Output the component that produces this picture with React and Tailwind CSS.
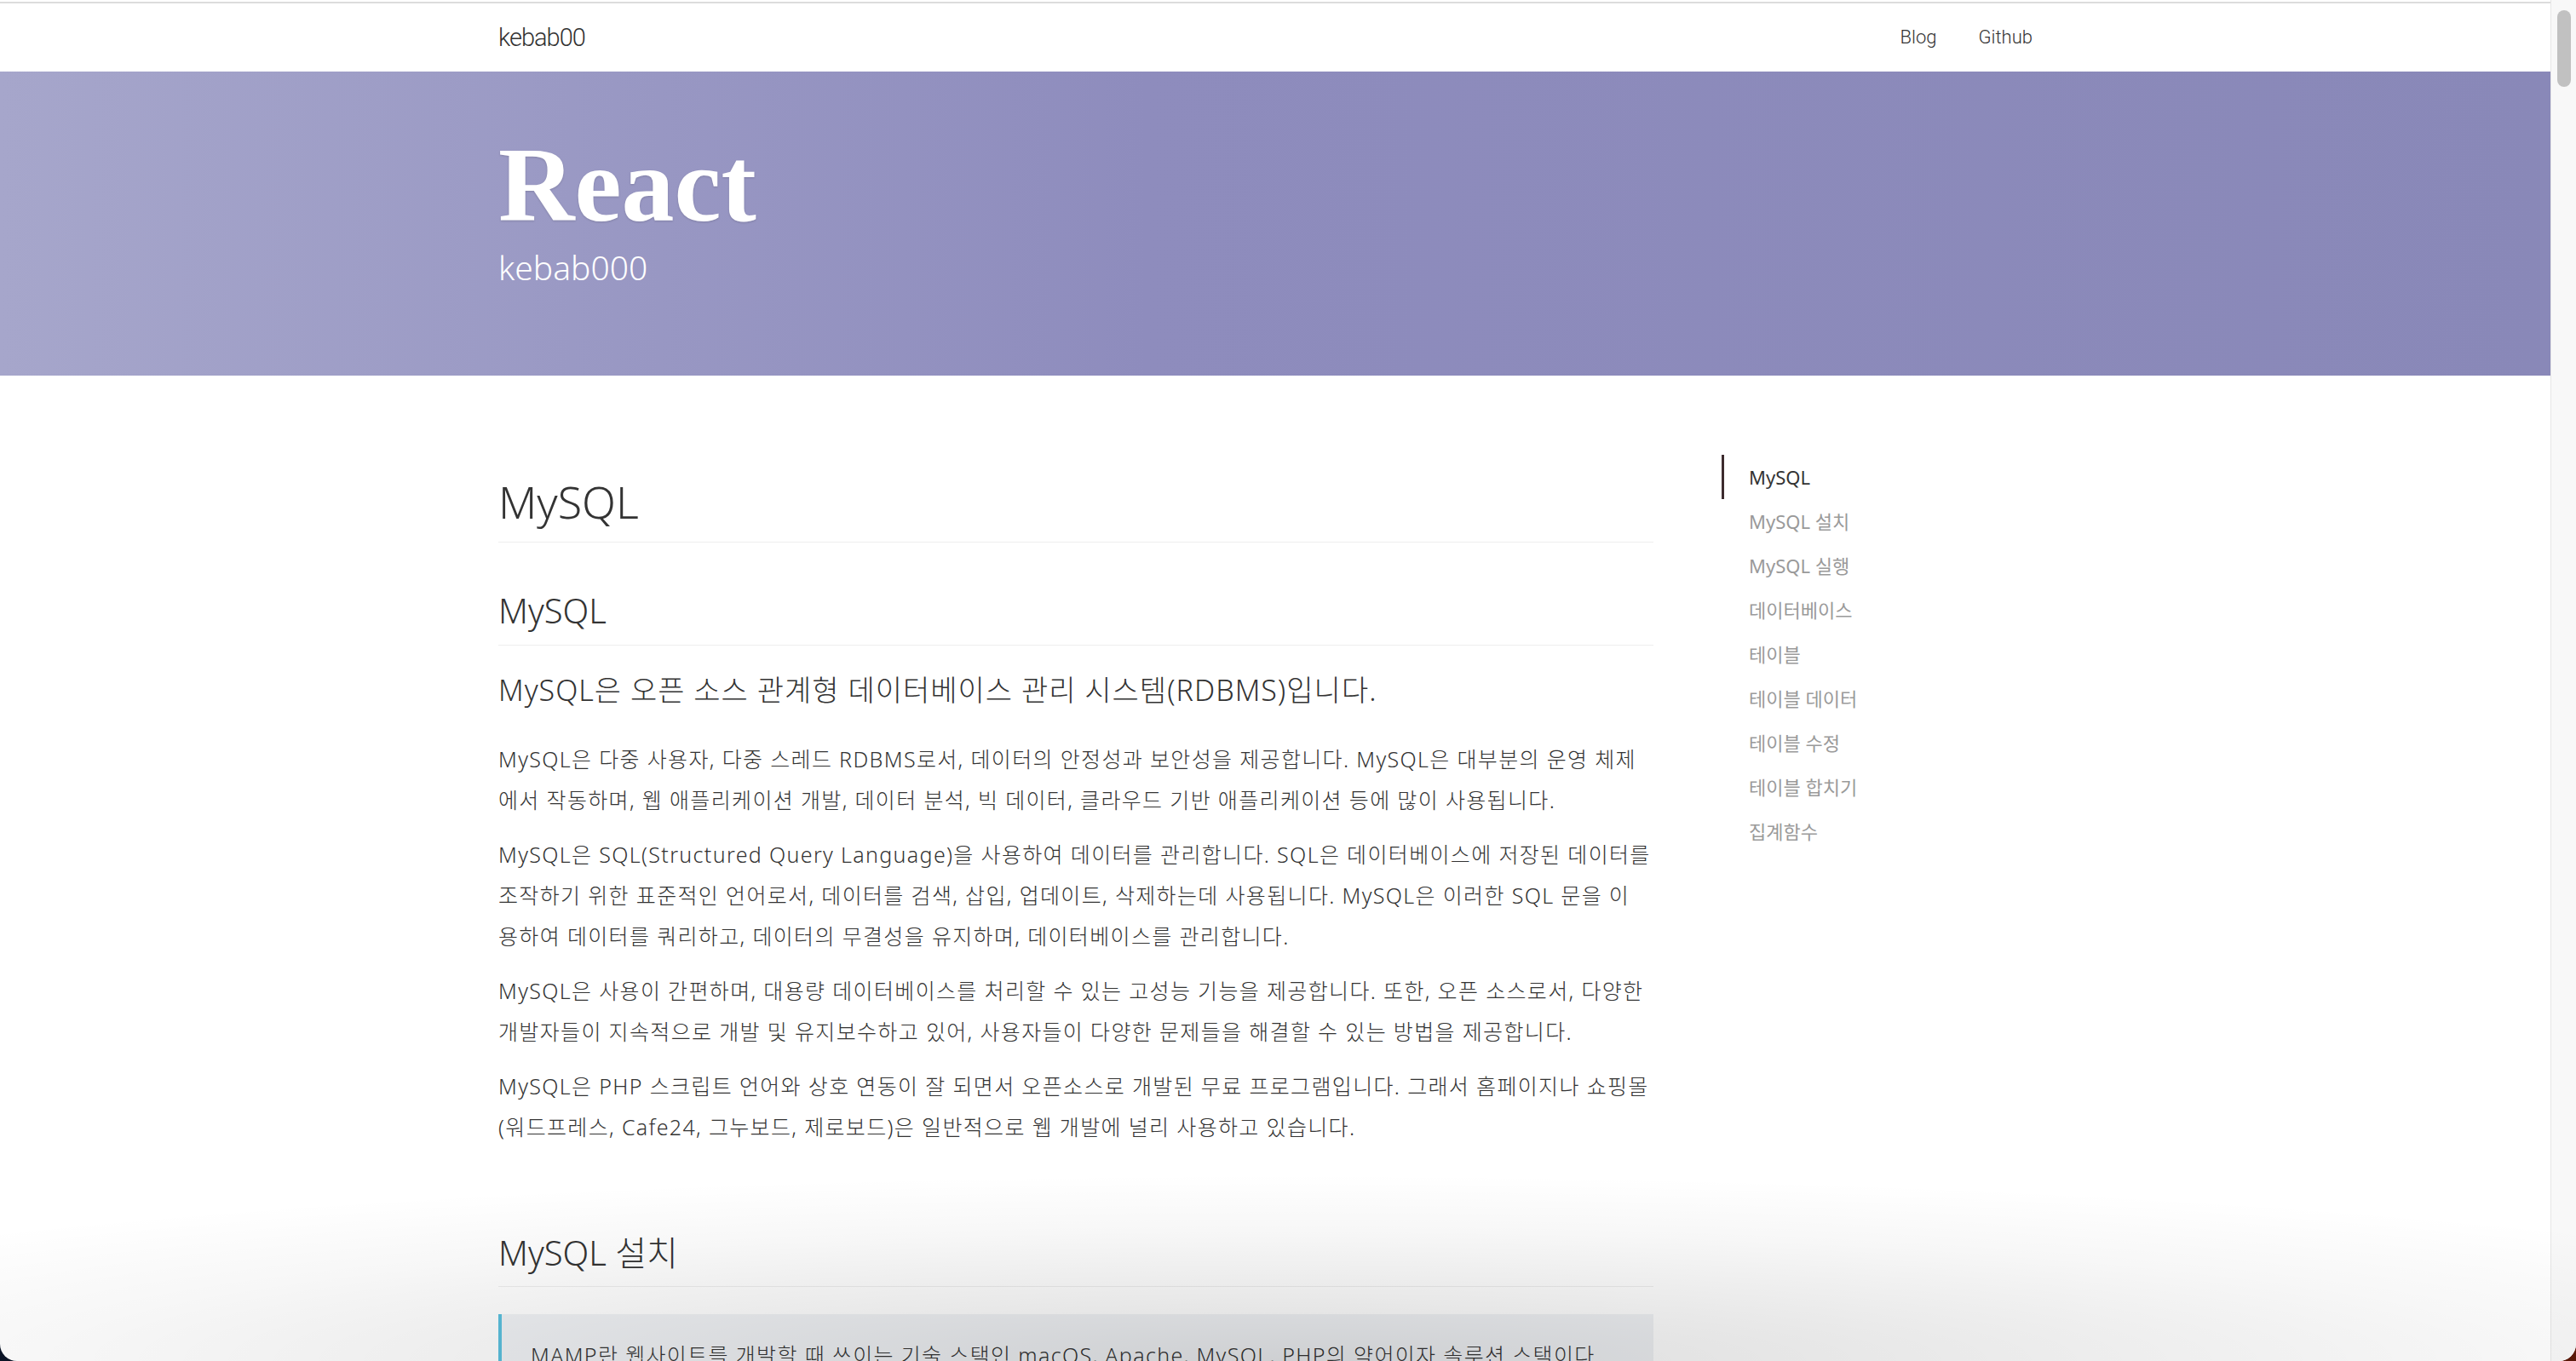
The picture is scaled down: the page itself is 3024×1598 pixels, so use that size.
import { useState } from "react";

const toc = [
  "MySQL",
  "MySQL 설치",
  "MySQL 실행",
  "데이터베이스",
  "테이블",
  "테이블 데이터",
  "테이블 수정",
  "테이블 합치기",
  "집계함수",
];

// lines kept as in the post so the wrap matches
const paragraphs = [
  [
    "MySQL은 다중 사용자, 다중 스레드 RDBMS로서, 데이터의 안정성과 보안성을 제공합니다. MySQL은 대부분의 운영 체제",
    "에서 작동하며, 웹 애플리케이션 개발, 데이터 분석, 빅 데이터, 클라우드 기반 애플리케이션 등에 많이 사용됩니다.",
  ],
  [
    "MySQL은 SQL(Structured Query Language)을 사용하여 데이터를 관리합니다. SQL은 데이터베이스에 저장된 데이터를",
    "조작하기 위한 표준적인 언어로서, 데이터를 검색, 삽입, 업데이트, 삭제하는데 사용됩니다. MySQL은 이러한 SQL 문을 이",
    "용하여 데이터를 쿼리하고, 데이터의 무결성을 유지하며, 데이터베이스를 관리합니다.",
  ],
  [
    "MySQL은 사용이 간편하며, 대용량 데이터베이스를 처리할 수 있는 고성능 기능을 제공합니다. 또한, 오픈 소스로서, 다양한",
    "개발자들이 지속적으로 개발 및 유지보수하고 있어, 사용자들이 다양한 문제들을 해결할 수 있는 방법을 제공합니다.",
  ],
  [
    "MySQL은 PHP 스크립트 언어와 상호 연동이 잘 되면서 오픈소스로 개발된 무료 프로그램입니다. 그래서 홈페이지나 쇼핑몰",
    "(워드프레스, Cafe24, 그누보드, 제로보드)은 일반적으로 웹 개발에 널리 사용하고 있습니다.",
  ],
];

const bodyFont = "font-['Noto_Sans','Noto_Sans_CJK_KR',sans-serif]";

function Navbar() {
  return (
    <nav className="h-[80px] bg-white flex items-center pl-[585px] pr-[608px] font-['Roboto',sans-serif] font-light text-[#333]">
      <a className="text-[29px] leading-none tracking-[-1px]">kebab00</a>
      <div className="ml-auto flex gap-[49px] text-[22px] leading-none">
        <a>Blog</a>
        <a>Github</a>
      </div>
    </nav>
  );
}

function Header() {
  return (
    <header className="h-[357px] bg-gradient-to-r from-[#a6a6cb] via-[#8e8cbd] via-45% to-[#8988b8] pl-[585px] pt-[74px] text-white">
      <h1 className="font-['Liberation_Serif',serif] font-bold text-[124px] leading-[120px] drop-shadow-[0_1px_1px_rgba(0,0,0,0.15)]">
        React
      </h1>
      <p className={`${bodyFont} font-light text-[39px] leading-[48px] mt-[12px]`}>kebab000</p>
    </header>
  );
}

function Toc() {
  const [active, setActive] = useState(0);
  return (
    <aside className={`w-[364px] pt-[93px] ${bodyFont}`}>
      <ul>
        {toc.map((item, i) => (
          <li
            key={item}
            onClick={() => setActive(i)}
            className={
              i === active
                ? "h-[52px] flex items-center border-l-[3px] border-[#3d2b2e] pl-[29px] text-[22px] text-[#333] cursor-pointer"
                : "h-[52px] flex items-center border-l-[3px] border-transparent pl-[29px] text-[22px] text-[#9a9a9a] cursor-pointer"
            }
          >
            {item}
          </li>
        ))}
      </ul>
    </aside>
  );
}

export default function App() {
  return (
    <div className="relative w-[3024px] h-[1598px] overflow-hidden bg-gradient-to-r from-[#0b1426] to-[#5a1808]">
      <div className="flex h-full bg-white rounded-b-[20px] overflow-hidden">
        <div className="flex-1 min-w-0">
          <div className="h-[2px] bg-white" />
          <div className="h-[2px] bg-[#dcdcdc]" />
          <Navbar />
          <Header />

          <div className={`flex pl-[585px] gap-[80px] text-[#333] ${bodyFont}`}>
            <main className="w-[1356px]">
              <h1 className="pt-[117px] text-[52px] font-light leading-[62px] pb-[16px] border-b border-[#eee]">MySQL</h1>
              <h2 className="mt-[56px] text-[40px] font-light leading-[1.2] pb-[16px] border-b border-[#eee]">MySQL</h2>
              <h3 className="mt-[32px] text-[34px] font-light leading-[40px] tracking-[1px]">
                MySQL은 오픈 소스 관계형 데이터베이스 관리 시스템(RDBMS)입니다.
              </h3>
              <div className="mt-[37px] flex flex-col gap-[16px] text-[25px] leading-[48px] font-light tracking-[1.35px]">
                {paragraphs.map((lines, i) => (
                  <p key={i}>
                    {lines.map((l) => (
                      <span key={l} className="block whitespace-nowrap">
                        {l}
                      </span>
                    ))}
                  </p>
                ))}
              </div>
              <h2 className="mt-[100px] text-[40px] font-light leading-[1.2] pb-[15px] border-b border-[#eee]">
                MySQL 설치
              </h2>
              <blockquote className="mt-[32px] border-l-4 border-[#5bc0de] bg-[#f0f2f5] pl-[34px] pt-[24px] pb-[24px] text-[25px] leading-[48px] font-light tracking-[1.35px]">
                MAMP란 웹사이트를 개발할 때 쓰이는 기술 스택인 macOS, Apache, MySQL, PHP의 약어이자 솔루션 스택이다.
              </blockquote>
            </main>
            <Toc />
          </div>
        </div>

        <div className="w-[30px] h-full bg-[#f8f8f8] border-l border-[#e6e6e6] pt-[12px] flex justify-center">
          <div className="w-[16px] h-[90px] rounded-full bg-[#c1c1c1]" />
        </div>
      </div>

      <div className="pointer-events-none absolute left-0 right-0 bottom-0 h-[220px] bg-[radial-gradient(ellipse_70%_100%_at_50%_100%,rgba(0,0,0,0.14),rgba(0,0,0,0.03)_70%,transparent)] rounded-b-[20px]" />
    </div>
  );
}
